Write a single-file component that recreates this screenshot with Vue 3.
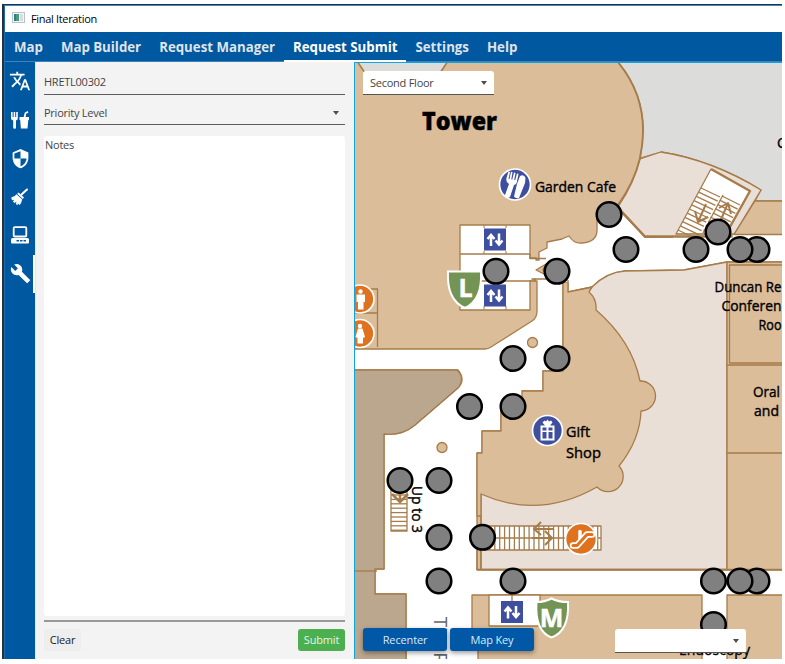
<script setup>
const tabs = ['Map', 'Map Builder', 'Request Manager', 'Request Submit', 'Settings', 'Help']
const activeTab = 'Request Submit'

const nodes = [
  [609, 214.5], [626, 249.5], [696, 249.5], [718, 232], [757, 249.5], [740, 249.5],
  [496, 271.3], [557, 271.3], [513, 358.5], [557, 358.5], [469.5, 406.5], [513, 406.5],
  [400, 480.5], [439, 480.5], [439, 537.3], [482.5, 537.3], [439, 581], [513, 581],
  [713.5, 581], [757, 581], [740, 581], [713.5, 624.5]
]
const elevators = [[484, 228.5], [484, 284.5], [501, 601]]
const range = (from, to, step) => {
  const out = []
  for (let v = from; v <= to; v += step) out.push(v)
  return out
}
const escalatorTreads = range(485, 600, 4.9)
const smallTreads = range(495, 531, 4.4)
const treadsLeft = range(0, 10, 1)
const treadsRight = range(0, 8, 1)

const labels = [
  { t: 'Garden Cafe', x: 535, y: 192, w: 81 },
  { t: 'Gift', x: 566, y: 437, w: 24 },
  { t: 'Shop', x: 566, y: 458, w: 35 },
  { t: 'Duncan Re', x: 714.5, y: 292, w: 67 },
  { t: 'Conferen', x: 721.5, y: 311, w: 60 },
  { t: 'Roo', x: 758.5, y: 330, w: 23 },
  { t: 'Oral', x: 753, y: 397, w: 27 },
  { t: 'and', x: 754, y: 416, w: 25 },
  { t: 'C', x: 777, y: 148, w: 9 },
  { t: 'Endoscopy', x: 679, y: 655, w: 71 }
]
</script>

<template>
  <div class="screen">
    <div class="desktop">
      <div class="window">
        <header class="titlebar">
          <svg class="app-icon" width="13" height="11" viewBox="0 0 13 11">
            <rect x=".5" y=".5" width="12" height="10" fill="#f4f6f7" stroke="#b9c2c7" />
            <rect x="2" y="2" width="5" height="7" fill="#2f7f7d" />
            <rect x="4" y="2" width="3" height="7" fill="#4a9b83" />
            <rect x="8" y="2" width="3" height="7" fill="#d5dde1" />
          </svg>
          <span class="title">Final Iteration</span>
        </header>

        <nav class="tabs">
          <span v-for="t in tabs" :key="t" class="tab" :class="{ active: t === activeTab }">{{ t }}</span>
        </nav>

        <div class="body">
          <aside class="rail">
            <div class="rail-item">
              <svg width="22" height="22" viewBox="0 0 24 24"><path fill="#fff" d="M12.87 15.07l-2.54-2.51.03-.03A17.52 17.52 0 0 0 14.07 6H17V4h-7V2H8v2H1v2h11.17C11.5 7.92 10.44 9.75 9 11.35 8.07 10.32 7.3 9.19 6.69 8h-2c.73 1.63 1.73 3.17 2.98 4.56l-5.09 5.02L4 19l5-5 3.11 3.11.76-2.04zM18.5 10h-2L12 22h2l1.12-3h4.75L21 22h2l-4.5-12zm-2.62 7l1.62-4.33L19.12 17h-3.24z" /></svg>
            </div>
            <div class="rail-item">
              <svg width="20" height="20" viewBox="0 0 20 20" fill="#fff">
                <path d="M1 2h1.6v5h1V2h1.6v5h1V2h1.6v6.2q0 1.800-1.800 2.400V18q0 .8-1.300.8T3.200 18v-7.400Q1 10 1 8.200z" />
                <path d="M9.500 7h4.200l1-4.300L17.600 1l.9 1.400-2.300 1.400-.6 3.200H19v3h-.7l-.8 8.500h-6.600L10.200 10h-.7z" />
              </svg>
            </div>
            <div class="rail-item">
              <svg width="21" height="21" viewBox="0 0 24 24"><path fill="#fff" d="M12 1 3 5v6c0 5.550 3.840 10.740 9 12 5.160-1.260 9-6.450 9-12V5zM12 3.600V12H19c-.53 4.120-3.280 7.790-7 8.940V12H5V6.300z" /></svg>
            </div>
            <div class="rail-item">
              <svg width="20" height="20" viewBox="0 0 20 20">
                <path d="M17 2.500 11.500 7.600" stroke="#fff" stroke-width="2" stroke-linecap="round" />
                <path fill="#fff" d="M8.600 5.400 14 10.600 12.700 12 7.200 6.800zM6.600 7.300l5.600 5.300Q11.500 16 9.700 18L7.800 16.500 7.600 18.300 5.800 17 6.500 14.800 4.300 16 3 14.600 4.200 12.700 2 13.200 1.200 10.600Q4.500 10 6.600 7.300z" />
              </svg>
            </div>
            <div class="rail-item">
              <svg width="20" height="20" viewBox="0 0 20 20">
                <rect x="3.700" y="2.200" width="12.600" height="9.300" rx="1" fill="none" stroke="#fff" stroke-width="1.800" />
                <path fill="#fff" fill-rule="evenodd" d="M2.500 13h15q1.500 0 1.500 1.500v3q0 1-1 1H2q-1 0-1-1v-3Q1 13 2.500 13zM6.500 15v1.500h2.500V15zM10 15v1.500h2.500V15zM13.500 15v1.500H16V15z" />
              </svg>
            </div>
            <div class="rail-item current">
              <svg width="21" height="21" viewBox="0 0 24 24"><path fill="#fff" d="m22.700 19-9.100-9.100c.9-2.300.4-5-1.500-6.900-2-2-5-2.400-7.400-1.300L9 6 6 9 1.600 4.700C.4 7.100.9 10.100 2.900 12.100c1.900 1.900 4.600 2.400 6.900 1.500l9.100 9.100c.4.4 1 .4 1.400 0l2.300-2.300c.5-.4.5-1.100.1-1.400z" /></svg>
            </div>
          </aside>

          <section class="form">
            <div class="field id-field">HRETL00302</div>
            <div class="field select-field"><span>Priority Level</span><i class="caret"></i></div>
            <div class="notes">Notes</div>
            <div class="notes-line"></div>
            <div class="actions">
              <button class="clear">Clear</button>
              <button class="submit">Submit</button>
            </div>
          </section>

          <main class="map-pane">
            <svg class="map" width="427" height="596" viewBox="355 63 427 596">
              <defs>
                <g id="lift">
                  <rect width="22" height="22" fill="#3f4f9f" />
                  <path d="M7 17.500V7M3.500 10.500 7 6.500l3.500 4M15 5v10.500M11.500 12 15 16l3.500-4" fill="none" stroke="#fff" stroke-width="2.500" />
                </g>
              </defs>
              <rect x="355" y="63" width="427" height="596" fill="#dbbd9a" />

              <g stroke="#a67c4b" stroke-width="1.300" stroke-linejoin="round">
                <path fill="#dcdcda" stroke-width="1.600" d="M357 61 365 73 440 73 448 61z" />
                <path fill="#dcdcda" d="M617 61Q652 102 640 158L661 152Q712 160 761 190L755 201H784V61z" />
                <path fill="#e9dfd7" d="M640 159 661 152Q712 160 761 190L733 236H645L618 207Q634 183 640 159z" />
                <path fill="none" stroke-width="1.800" d="M617 61Q652 102 640 158Q634 183 618 205" />

                <path fill="#fff" d="M353 349H485Q488 349 491 347L532 321Q537 318 537 311V281H535V279H530V258H536V260H539V252L547 248V242L562 239 569 236Q574 244 582 243Q597 242 597 230V220L609 202 622 213 645 237H732V234H784V262H727L684 270 656 270.500 625 271Q606 273 592 287L568 292V283H563V371H543V391H522V400H501V431H482V453H477V570H784V595H727V661H702V595H472V630H478V661H406V594H375V569H384V434Q402 436 415 425L458 388Q466 380 458 370H353z" />
                <path fill="none" stroke-width="2" d="M622 212 645 237H673" />

                <path fill="#e9dfd7" d="M589 291 592 287Q607 272 625 271L656 270.500 684 270 727 262V569.500H481V490L560 460z" />
                <path fill="none" d="M477 569.500H784" />

                <path fill="#bba78e" d="M353 370H457Q465 377 459 387L415 425Q402 436 384 434V569H375V594H406V661H353z" />
                <path fill="none" d="M353 571H377" />

                <path fill="#dbbd9a" d="M563 283H568V292L590 288.500 589 292Q597 299 596 310Q632 341 640 381A15 15 0 1 1 641 411Q640 440 619 466A15 15 0 0 1 597 487Q539 520 481 494V516H477V453H482V431H501V406H501V391.500H522V391H543V371H563z" stroke="none" />
                <path fill="#fff" stroke="none" d="M500 391H522V401H501V410H500z" />
                <path fill="none" d="M563 283V371H543V391H522V401M501 410V431H482V453H477V516H481M568 280V292L592 287 589 292Q597 299 596 310Q632 341 640 381A15 15 0 1 1 641 411Q640 440 619 466A15 15 0 0 1 597 487Q539 520 481 494V570M477 550V570" />
                <path fill="#dbbd9a" d="M755 201H784V234.500H734z" />

                <path fill="#fff" d="M460 225H530V310H460zM460 254H530M460 281H530" />
                <path fill="none" stroke-width="1" d="M484 225V228M506 225V228M484 251V254M506 251V254M484 306V310M506 306V310" />
                <path d="M530 259V280" stroke="#fff" stroke-width="3" />
                <path fill="none" d="M530 254V258.500H546M530 281H535V279H546" />
                <path fill="#dbbd9a" d="M536 270 546 264 543 270 546 275z" />

                <path fill="#dbbd9a" d="M727 262H784V569.500H727z" />
                <path fill="#dbbd9a" d="M729.500 265H784V363H729.500zM727 365H784M727 453H784" />

                <path fill="none" d="M355 313H377M370 289H377.500V347" />
                <path fill="#fff" d="M489 595H540V626H489zM512 595V601" />

                <path fill="#fff" stroke="none" d="M711 169 750 191 727 233H676z" />
                <path fill="none" stroke-width="1.300" d="M727 234H676L711 169" />
                <path fill="none" stroke-width="2.400" d="M711 169 750 191 726 234" />
                <path v-for="i in treadsLeft" :key="'l' + i" fill="none" :d="`M${701 - i * 2.3} ${188 + i * 4.2} l19 9`" />
                <path v-for="i in treadsRight" :key="'r' + i" fill="none" :d="`M${722 - i * 2.3} ${196 + i * 4.2} l18 9`" />
                <path fill="none" d="M723 195 703 233" />
                <path fill="none" stroke-width="2" d="M706 204 698 222M695 211 698 222 708 217M728 203 720 222M719 208 728 203 731 214" />

                <path fill="#fff" d="M481 526H601V550H481z" />
                <path v-for="x in escalatorTreads" :key="'e' + x" fill="none" :d="`M${x} 526V550`" />
                <path fill="none" d="M481 538H601" />
                <path fill="none" stroke-width="2" d="M553 529H534M541 522 534 529 541 535M532 538H552M545 531 552 538 545 545" />

                <path fill="#fff" d="M391 490H407V531H391z" />
                <path v-for="y in smallTreads" :key="'s' + y" fill="none" :d="`M391 ${y}H407`" />
                <path fill="none" stroke-width="2.500" d="M400 487V501M392 494 400 502 408 494" />

                <circle cx="532.500" cy="342.500" r="5" fill="#dbbd9a" />
                <circle cx="442" cy="447.500" r="5" fill="#dbbd9a" />
              </g>

              <use v-for="e in elevators" :key="e.join()" href="#lift" :x="e[0]" :y="e[1]" />

              <g stroke="#fff" stroke-width="1.700">
                <circle cx="360" cy="299" r="14" fill="#de721f" />
                <circle cx="360" cy="333.500" r="14" fill="#de721f" />
                <circle cx="581" cy="539" r="15.500" fill="#de721f" />
                <circle cx="515" cy="184.500" r="15.500" fill="#3f4f9f" />
                <circle cx="547.500" cy="430.500" r="15" fill="#3f4f9f" />
              </g>
              <g fill="#fff">
                <circle cx="360.500" cy="291.500" r="2.200" />
                <path d="M356.500 294.500H365V302H363.500V309.500H358V302H356.500z" />
                <circle cx="360" cy="326" r="2.200" />
                <path d="M358 328.500H362.500L365 337 363 338V343.500H357.500V338L355.500 337z" />
                <path d="M508.500 171.500 506.500 178Q505.500 182.500 509 184L505 195Q505 198 508 198L510 197 514 185Q517 184 517 181L518.500 174 517 173.500 515.200 180H514.200L515.500 173 514 172.500 512.300 179.500H511.300L512.500 172 511 171.800 509.500 179H508.500L510 172z" />
                <path d="M520 176Q524 174 525.500 178L525 183 519 198Q515.500 199 514 196.500L517 184z" />
                <path fill-rule="evenodd" d="M540.500 425.500H545L542.500 422.500 544.500 420.500 546 421.500 547.500 419.500 549 421.500 551 420.500 552.500 422.500 550 425.500H554.500V440.500H540.500zM542.500 427.500V430.500H546.500V427.500zM548.500 427.500V430.500H552.500V427.500zM542.500 432V438.500H546.500V432zM548.500 432V438.500H552.500V432z" />
              </g>
              <g fill="none" stroke-linecap="round" stroke-linejoin="round">
                <path stroke="#fff" stroke-width="6.500" d="M573 545.500H577L587 534.500H592" />
                <path stroke="#fff" stroke-width="3.500" d="M580 531.500V539" />
                <path stroke="#de721f" stroke-width="3" d="M573 545.500H577L587 534.500H592" />
              </g>

              <g stroke="#fff" stroke-width="2" fill="#739454">
                <path d="M448 271.500H481Q482.500 300 465 308Q446.500 300 448 271.500z" />
                <path d="M536.500 602Q545 602 551.500 598.500Q558 602 568 602Q569.500 631 551.500 637.500Q534.500 631 536.500 602z" />
              </g>
              <g class="badge-text">
                <text x="465.500" y="297" text-anchor="middle">L</text>
                <text x="551.500" y="626.500" text-anchor="middle">M</text>
              </g>

              <circle v-for="n in nodes" :key="n.join()" :cx="n[0]" :cy="n[1]" r="12.300" fill="#808080" stroke="#000" stroke-width="2.500" />

              <g class="map-text">
                <text class="tower" x="422" y="130" textLength="75" lengthAdjust="spacingAndGlyphs">Tower</text>
                <text v-for="l in labels" :key="l.t" :x="l.x" :y="l.y" :textLength="l.w" lengthAdjust="spacingAndGlyphs">{{ l.t }}</text>
                <text transform="translate(411.500 486) rotate(90)" textLength="47" lengthAdjust="spacingAndGlyphs">Up to 3</text>
                <text class="street" transform="translate(434 616.500) rotate(90)">The Pike</text>
              </g>
            </svg>

            <div class="overlay top"><div class="combo"><span>Second Floor</span><i class="caret"></i></div></div>
            <div class="overlay bottom">
              <button class="map-btn">Recenter</button>
              <button class="map-btn second">Map Key</button>
              <div class="combo end"><span></span><i class="caret"></i></div>
            </div>
          </main>
        </div>
      </div>
    </div>
  </div>
</template>

<style>
body { background: #fff; }
</style>

<style scoped>
* { box-sizing: border-box; }
.screen { width: 785px; height: 664px; padding: 4px 3px 5px 2px; overflow: hidden; font-family: "Open Sans", "Noto Sans", sans-serif; font-size: 11px; color: #444; }
.desktop { height: 655px; padding: 1px 0 0 2px; background: #2b3036; }
.window { height: 654px; border-left: 1px solid #1c6cb2; border-top: 1px solid #3e8ac9; background: #fff; display: flex; flex-direction: column; }
.titlebar { height: 26px; flex: none; display: flex; align-items: center; padding: 0 0 1px 7px; gap: 6px; color: #000; font-size: 11px; }
.app-icon { position: relative; top: -1px; }
.title { letter-spacing: -0.330px; }
.tabs { height: 30px; flex: none; background: #0058a0; display: flex; border-bottom: 1px solid #3c82bd; }
.tab { height: 30px; line-height: 30px; padding: 0 9px; font-size: 13.250px; font-weight: 700; color: #dfe4ea; white-space: nowrap; }
.tab.active { color: #fff; border-bottom: 2px solid #fff; }
.body { display: flex; flex: 1; min-height: 0; }
.rail { width: 30px; flex: none; background: #0058a0; display: flex; flex-direction: column; }
.rail-item { height: 38.500px; display: flex; align-items: center; justify-content: center; }
.rail-item.current { border-right: 2px solid #fff; padding-left: 2px; }
.form { width: 319px; flex: none; background: #f3f3f3; padding: 0 9px 0 8px; display: flex; flex-direction: column; border-left: 1px solid #e4e8ec; }
.field { display: flex; justify-content: space-between; align-items: center; border-bottom: 1px solid #5c5c5c; letter-spacing: -0.250px; }
.id-field { height: 33px; padding-top: 6px; }
.select-field { height: 30px; padding: 6px 6px 0 0; }
.caret { width: 0; height: 0; border: 3.500px solid transparent; border-top: 4px solid #4d4d4d; border-bottom: 0; }
.notes { margin-top: 11px; height: 480px; background: #fff; border-radius: 3px; padding: 1px; line-height: 16px; letter-spacing: -0.250px; }
.notes-line { height: 2px; margin-top: 4px; background: #999; }
.actions { display: flex; justify-content: space-between; padding-top: 7px; }
button { border: 0; height: 22px; padding: 0 0 1px; font-family: inherit; font-size: 11px; border-radius: 3px; letter-spacing: -0.150px; }
.clear { width: 37px; background: #eee; color: #222; }
.submit { width: 47px; background: #4caf50; color: #e6f5e6; }
.map-pane { position: relative; width: 428px; flex: none; border-left: 1px solid #12a3dc; border-top: 1px solid #12a3dc; overflow: hidden; }
.map { display: block; }
.map-text { fill: #000; stroke: #000; stroke-width: 0.400px; font-family: "Open Sans", "Noto Sans", sans-serif; font-size: 15px; }
.tower { font-size: 25px; font-weight: 800; }
.street { font-family: "Liberation Sans", sans-serif; font-size: 18px; fill: #666; stroke: none; }
.badge-text { fill: #fff; font-family: "Open Sans", sans-serif; font-weight: 700; font-size: 25px; stroke: #fff; stroke-width: 0.500px; }
.overlay { position: absolute; left: 8px; display: flex; align-items: flex-start; }
.overlay.top { top: 8px; }
.overlay.bottom { top: 565px; width: 383px; }
.combo { width: 131px; height: 24px; background: #fff; border-radius: 3px 3px 0 0; border-bottom: 1px solid #555; display: flex; align-items: center; justify-content: space-between; padding: 0 7px; letter-spacing: -0.250px; }
.combo.end { margin: 1px 0 0 auto; }
.map-btn { width: 84px; height: 23px; background: #0058a6; color: #dce8f4; box-shadow: 0 2px 5px rgba(0, 0, 0, 0.400); }
.map-btn.second { margin-left: 3px; }
</style>
